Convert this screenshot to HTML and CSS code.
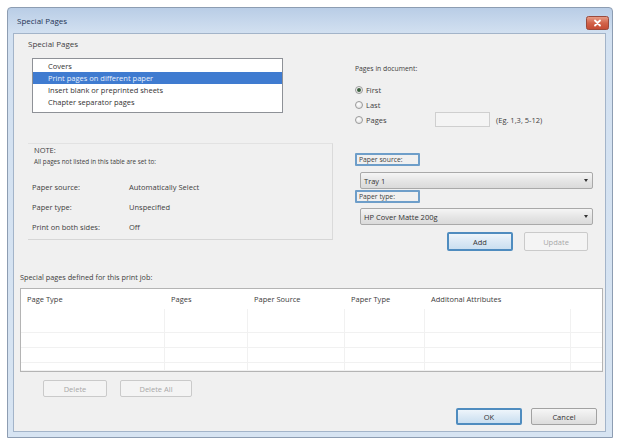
FILE: index.html
```html
<!DOCTYPE html>
<html lang="en">
<head>
<meta charset="utf-8">
<title>Special Pages</title>
<link rel="stylesheet" href="styles.css">
</head>
<body>
<div class="window">
  <div class="titlebar">
    <span class="title">Special Pages</span>
    <span class="close">
      <svg width="23" height="14" viewBox="0 0 23 14">
        <defs>
          <linearGradient id="closeFill" x1="0" y1="0" x2="0" y2="1">
            <stop offset="0" stop-color="#e9a08a"/>
            <stop offset="0.5" stop-color="#d2634a"/>
            <stop offset="1" stop-color="#c44a33"/>
          </linearGradient>
        </defs>
        <rect x="0.5" y="0.5" width="22" height="13" rx="2" fill="url(#closeFill)" stroke="#9a4a3c"/>
        <path d="M9 4.5 L14 9.5 M14 4.5 L9 9.5" stroke="#fff" stroke-width="1.8" stroke-linecap="round"/>
      </svg>
    </span>
  </div>

  <div class="client">
    <div class="group-label">Special Pages</div>

    <div class="upper">
      <div class="left-col">
        <ul class="listbox">
          <li>Covers</li>
          <li class="selected">Print pages on different paper</li>
          <li>Insert blank or preprinted sheets</li>
          <li>Chapter separator pages</li>
        </ul>

        <div class="note">
          <div class="note-title">NOTE:</div>
          <div class="note-sub">All pages not listed in this table are set to:</div>
          <div class="note-row"><span class="note-key">Paper source:</span><span>Automatically Select</span></div>
          <div class="note-row"><span class="note-key">Paper type:</span><span>Unspecified</span></div>
          <div class="note-row"><span class="note-key">Print on both sides:</span><span>Off</span></div>
        </div>
      </div>

      <div class="right-col">
        <div class="pages-title">Pages in document:</div>
        <div class="radios">
          <div class="radio-row"><span class="radio checked"></span><span>First</span></div>
          <div class="radio-row"><span class="radio"></span><span>Last</span></div>
          <div class="radio-row">
            <span class="radio"></span><span class="radio-text">Pages</span>
            <span class="textbox"></span>
            <span class="hint">(Eg. 1,3, 5-12)</span>
          </div>
        </div>

        <div class="focus-label">Paper source:</div>
        <div class="combo combo-source"><span>Tray 1</span><span class="arrow"></span></div>
        <div class="focus-label focus-type">Paper type:</div>
        <div class="combo combo-type"><span>HP Cover Matte 200g</span><span class="arrow"></span></div>

        <div class="add-row">
          <span class="btn btn-default btn-add">Add</span>
          <span class="btn btn-disabled btn-update">Update</span>
        </div>
      </div>
    </div>

    <div class="defined-label">Special pages defined for this print job:</div>

    <div class="table">
      <div class="thead">
        <span>Page Type</span>
        <span>Pages</span>
        <span>Paper Source</span>
        <span>Paper Type</span>
        <span>Additonal Attributes</span>
        <span></span>
      </div>
      <div class="tbody">
        <span></span><span></span><span></span><span></span><span></span><span></span>
        <span></span><span></span><span></span><span></span><span></span><span></span>
        <span></span><span></span><span></span><span></span><span></span><span></span>
        <span></span><span></span><span></span><span></span><span></span><span></span>
      </div>
    </div>

    <div class="row-buttons">
      <span class="btn btn-disabled btn-delete">Delete</span>
      <span class="btn btn-disabled btn-delete-all">Delete All</span>
    </div>

    <div class="dialog-buttons">
      <span class="btn btn-default btn-ok">OK</span>
      <span class="btn btn-cancel">Cancel</span>
    </div>
  </div>
</div>
</body>
</html>
```

FILE: styles.css
```css
* {
  box-sizing: border-box;
  margin: 0;
  padding: 0;
}

body {
  width: 618px;
  height: 440px;
  overflow: hidden;
  background: #ffffff;
  font-family: "Open Sans", "Noto Sans", sans-serif;
  font-size: 7.5px;
  color: #3e3e3e;
}

/* dialog frame */
.window {
  margin: 7px 0 0 7px;
  width: 606px;
  height: 431px;
  border: 1px solid #8d9db2;
  border-radius: 4px 4px 0 0;
  background: linear-gradient(#b9cde6, #d3e1f1 26px, #d7e4f2);
  padding: 0 6px 5px 5px;
  display: flex;
  flex-direction: column;
}

.titlebar {
  height: 25px;
  display: flex;
  align-items: center;
}

.title {
  margin-left: 4px;
  font-size: 8px;
  color: #1f3454;
}

.close {
  margin-left: auto;
  margin-right: -3px;
  align-self: flex-start;
  margin-top: 8px;
  width: 23px;
  height: 14px;
  display: flex;
}

.client {
  height: 399px;
  border: 1px solid #a3b4c9;
  background: #f0f0f0;
  display: flex;
  flex-direction: column;
}

.group-label {
  margin: 5px 0 0 14px;
  height: 10px;
  line-height: 10px;
  font-size: 8px;
}

/* upper area: list + note on the left, options on the right */
.upper {
  display: grid;
  grid-template-columns: 341px 1fr;
}

.listbox {
  list-style: none;
  margin: 9px 0 0 18px;
  width: 251px;
  height: 55px;
  border: 1px solid #8e9197;
  background: #ffffff;
  padding-top: 1px;
}

.listbox li {
  height: 12px;
  line-height: 12px;
  padding-left: 15px;
  color: #333;
}

.listbox li.selected {
  background: #3f7bd0;
  color: #e8f0fb;
}

.note {
  margin: 30px 0 0 14px;
  width: 305px;
  height: 97px;
  border-top: 1px solid #e2e2e2;
  border-right: 1px solid #dadada;
  border-bottom: 1px solid #d6d6d6;
  padding: 1px 0 0 6px;
}

.note-title {
  height: 10px;
  line-height: 10px;
  font-size: 7.5px;
}

.note-sub {
  height: 9px;
  line-height: 9px;
  margin-top: 2px;
  font-size: 6.3px;
}

.note-row {
  height: 20px;
  line-height: 20px;
  display: flex;
  margin-left: -2px;
}

.note-row:first-of-type {
  margin-top: 0;
}

.note-sub + .note-row {
  margin-top: 11px;
}

.note-key {
  width: 97px;
}

/* right column */
.right-col {
  display: flex;
  flex-direction: column;
  align-items: flex-start;
}

.pages-title {
  margin-top: 15px;
  height: 10px;
  line-height: 10px;
  font-size: 6.8px;
}

.radios {
  margin-top: 8px;
}

.radio-row {
  height: 15px;
  display: flex;
  align-items: center;
}

.radio {
  width: 8px;
  height: 8px;
  border-radius: 50%;
  border: 1px solid #9a9a9a;
  background: radial-gradient(circle at 40% 35%, #ffffff, #dcdcdc);
  margin-right: 3px;
  display: flex;
  align-items: center;
  justify-content: center;
}

.radio.checked::after {
  content: "";
  width: 4px;
  height: 4px;
  border-radius: 50%;
  background: #3b5f3e;
}

.radio-text {
  width: 69px;
}

.textbox {
  width: 55px;
  height: 15px;
  border: 1px solid #cfcfcf;
  background: #f4f4f4;
  margin-right: 6px;
}

.focus-label {
  margin-top: 26px;
  width: 65px;
  height: 13px;
  line-height: 10px;
  border: 2px solid #6e9ec9;
  border-radius: 1px;
  padding-left: 2px;
  font-size: 6.8px;
}

.focus-type {
  margin-top: 1px;
}

.combo {
  margin: 6px 0 0 5px;
  width: 233px;
  height: 17px;
  border: 1px solid #a9a9a9;
  border-radius: 2px;
  background: linear-gradient(#f5f5f5, #e6e6e6 50%, #dadada);
  display: flex;
  align-items: center;
  justify-content: space-between;
  padding: 0 4px 0 3px;
  color: #333;
}

.combo-type {
  margin-top: 5px;
}

.arrow {
  width: 0;
  height: 0;
  border-left: 2.5px solid transparent;
  border-right: 2.5px solid transparent;
  border-top: 3px solid #333;
}

.add-row {
  margin: 7px 0 0 92px;
  display: flex;
  gap: 11px;
}

/* buttons */
.btn {
  height: 19px;
  display: flex;
  align-items: center;
  justify-content: center;
  border: 1px solid #a2a2a2;
  border-radius: 2px;
  background: linear-gradient(#f6f6f6, #e9e9e9 50%, #dcdcdc);
  color: #333;
}

.btn-default {
  border: 2px solid #4f8cbf;
  background: linear-gradient(#eef5fb, #dbe9f5 50%, #cadff0);
}

.btn-disabled {
  border: 1px solid #cacaca;
  background: #f4f4f4;
  color: #a8a8a8;
}

.btn-add {
  width: 66px;
}

.btn-update {
  width: 64px;
}

.defined-label {
  margin: 21px 0 0 6px;
  height: 10px;
  line-height: 10px;
  font-size: 7.3px;
}

/* list view of defined pages */
.table {
  margin: 6px 0 0 6px;
  width: 583px;
  height: 84px;
  border: 1px solid #b4b4b4;
  background: #ffffff;
}

.thead,
.tbody {
  display: grid;
  grid-template-columns: 144px 83px 97px 80px 146px 1fr;
}

.thead {
  height: 20px;
}

.thead span {
  line-height: 20px;
  padding-left: 6px;
  font-size: 7.5px;
  color: #3c3c3c;
}

.tbody {
  grid-template-rows: 24px 15px 15px 8px;
}

.tbody span {
  border-right: 1px solid #f1f1f1;
  border-bottom: 1px solid #f1f1f1;
}

.tbody span:nth-child(6n) {
  border-right: none;
}

.row-buttons {
  margin: 8px 0 0 29px;
  display: flex;
  gap: 13px;
}

.row-buttons .btn {
  height: 17px;
}

.btn-delete {
  width: 64px;
}

.btn-delete-all {
  width: 72px;
}

.dialog-buttons {
  margin-top: 11px;
  padding-right: 8px;
  display: flex;
  justify-content: flex-end;
  gap: 9px;
}

.dialog-buttons .btn {
  width: 66px;
  height: 17px;
}
```
